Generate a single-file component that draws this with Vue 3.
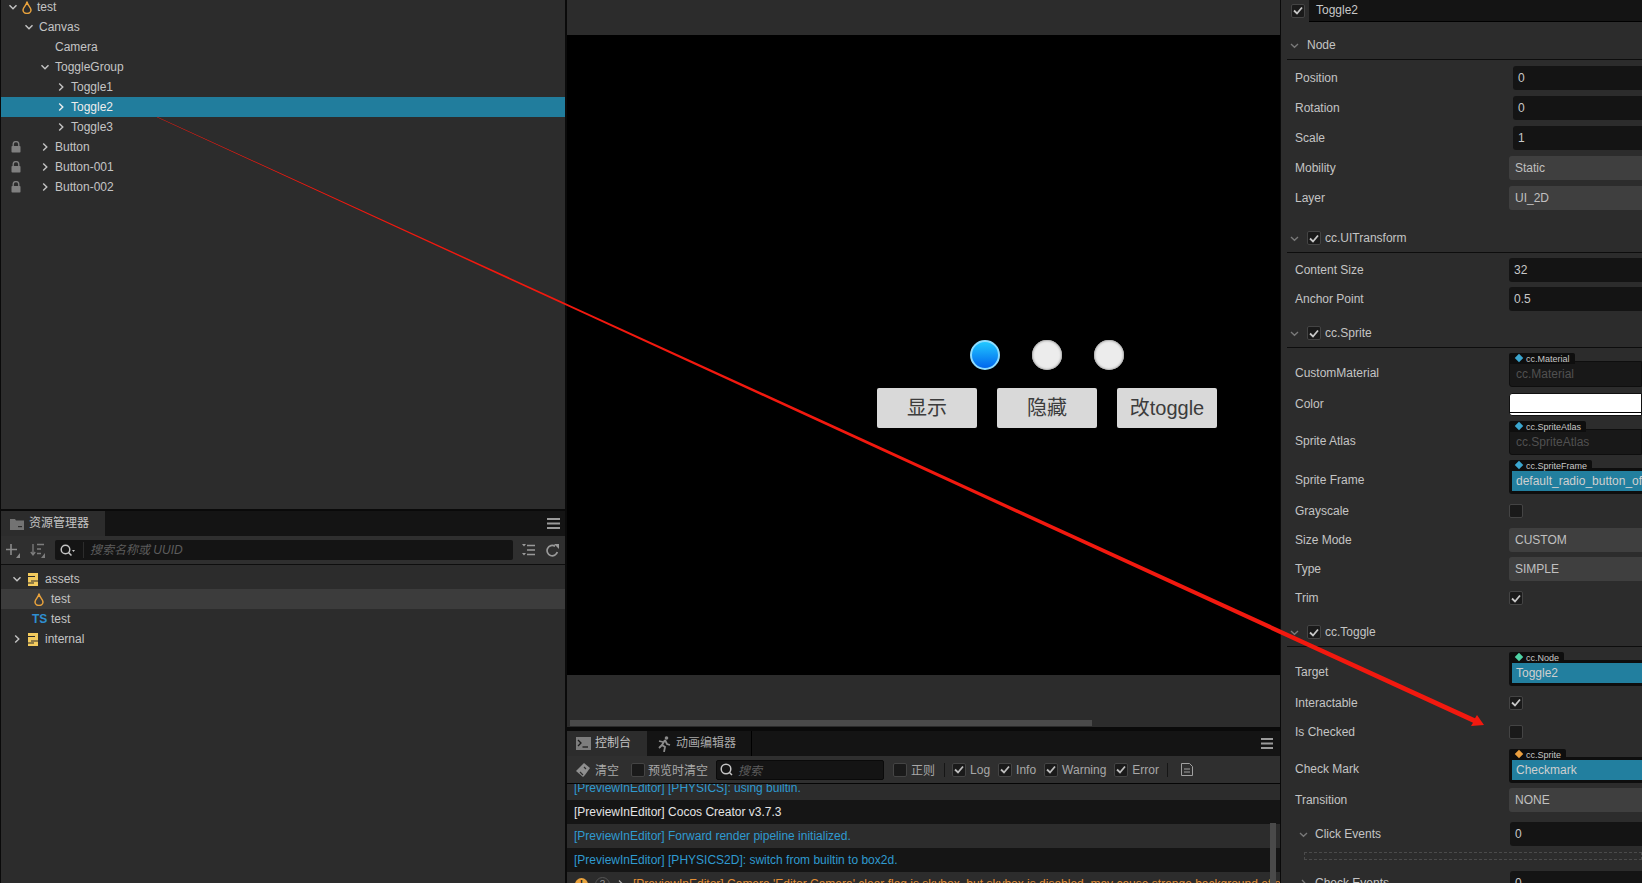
<script setup>
const sceneTree = [
  { name: 'test', depth: 0, arrow: 'down', flame: true },
  { name: 'Canvas', depth: 1, arrow: 'down' },
  { name: 'Camera', depth: 2 },
  { name: 'ToggleGroup', depth: 2, arrow: 'down' },
  { name: 'Toggle1', depth: 3, arrow: 'right' },
  { name: 'Toggle2', depth: 3, arrow: 'right', selected: true },
  { name: 'Toggle3', depth: 3, arrow: 'right' },
  { name: 'Button', depth: 2, arrow: 'right', locked: true },
  { name: 'Button-001', depth: 2, arrow: 'right', locked: true },
  { name: 'Button-002', depth: 2, arrow: 'right', locked: true }
]

const filters = ['Log', 'Info', 'Warning', 'Error']

const logs = [
  { text: '[PreviewInEditor] [PHYSICS]: using builtin.', cls: 'info alt' },
  { text: '[PreviewInEditor] Cocos Creator v3.7.3', cls: 'log' },
  { text: '[PreviewInEditor] Forward render pipeline initialized.', cls: 'info alt' },
  { text: '[PreviewInEditor] [PHYSICS2D]: switch from builtin to box2d.', cls: 'info' }
]

const sections = [
  {
    title: 'Node', check: false, cls: 'first',
    rows: [
      { label: 'Position', type: 'num', value: '0', h: 30 },
      { label: 'Rotation', type: 'num', value: '0', h: 30 },
      { label: 'Scale', type: 'num', value: '1', h: 30 },
      { label: 'Mobility', type: 'select', value: 'Static', h: 30 },
      { label: 'Layer', type: 'select', value: 'UI_2D', h: 30 }
    ]
  },
  {
    title: 'cc.UITransform', check: true, cls: 'm11',
    rows: [
      { label: 'Content Size', type: 'input', value: '32', h: 29 },
      { label: 'Anchor Point', type: 'input', value: '0.5', h: 29 }
    ]
  },
  {
    title: 'cc.Sprite', check: true, cls: 'm6',
    rows: [
      { label: 'CustomMaterial', type: 'object', tag: 'cc.Material', value: 'cc.Material', h: 40, empty: true, color: '#3ba6cf' },
      { label: 'Color', type: 'color', h: 28 },
      { label: 'Sprite Atlas', type: 'object', tag: 'cc.SpriteAtlas', value: 'cc.SpriteAtlas', h: 39, empty: true, color: '#3ba6cf' },
      { label: 'Sprite Frame', type: 'object', tag: 'cc.SpriteFrame', value: 'default_radio_button_off', h: 39, color: '#3ba6cf' },
      { label: 'Grayscale', type: 'check', on: false, h: 29 },
      { label: 'Size Mode', type: 'select', value: 'CUSTOM', h: 29 },
      { label: 'Type', type: 'select', value: 'SIMPLE', h: 29 },
      { label: 'Trim', type: 'check', on: true, h: 30 }
    ]
  },
  {
    title: 'cc.Toggle', check: true, cls: 'm5',
    rows: [
      { label: 'Target', type: 'object', tag: 'cc.Node', value: 'Toggle2', h: 39, color: '#4fd3a5' },
      { label: 'Interactable', type: 'check', on: true, h: 29 },
      { label: 'Is Checked', type: 'check', on: false, h: 29 },
      { label: 'Check Mark', type: 'object', tag: 'cc.Sprite', value: 'Checkmark', h: 39, color: '#eb9f3f' },
      { label: 'Transition', type: 'select', value: 'NONE', h: 30 }
    ]
  }
]
</script>

<template>
  <div class="editor">
    <!-- left column -->
    <div class="left">
      <div class="hierarchy">
        <div class="tree scene-tree">
          <div
            v-for="n in sceneTree"
            :key="n.name"
            class="tree-row"
            :class="{ selected: n.selected }"
            :style="{ paddingLeft: 7 + n.depth * 16 + 'px' }"
          >
            <svg v-if="n.locked" class="lock" width="10" height="12" viewBox="0 0 10 12">
              <path d="M2.2 5V3.4a2.8 2.8 0 0 1 5.6 0V5" fill="none" stroke="#808080" stroke-width="1.3" />
              <rect x="0.5" y="5" width="9" height="6.5" rx="0.8" fill="#808080" />
            </svg>
            <span class="slot">
              <svg v-if="n.arrow === 'down'" width="10" height="10" viewBox="0 0 10 10"><path d="M1.5 3.2 5 6.8l3.5-3.6" fill="none" stroke="currentColor" stroke-width="1.4" /></svg>
              <svg v-if="n.arrow === 'right'" width="10" height="10" viewBox="0 0 10 10"><path d="M3.2 1.5 6.8 5 3.2 8.5" fill="none" stroke="currentColor" stroke-width="1.4" /></svg>
            </span>
            <svg v-if="n.flame" class="flame" width="10" height="13" viewBox="0 0 10 13"><path d="M5 0.500C5 4 1 6 1 9a4 3.400 0 0 0 8 0C9 6 5 4 5 0.500Z" fill="none" stroke="#e8a23d" stroke-width="1.500" /></svg>
            <span>{{ n.name }}</span>
          </div>
        </div>
      </div>

      <div class="assets">
        <div class="tabbar">
          <div class="tab asset-tab">
            <svg width="14" height="12" viewBox="0 0 14 12"><path d="M0 1h5l1 1.500h8V12H0Z" fill="#737373" /><rect x="8" y="8" width="4" height="1.200" fill="#2c2c2c" /></svg>
            <span class="cjk raised">资源管理器</span>
          </div>
          <svg class="burger" width="13" height="11" viewBox="0 0 13 11"><path d="M0 1h13M0 5.500h13M0 10h13" stroke="#9a9a9a" stroke-width="2" /></svg>
        </div>
        <div class="asset-toolbar">
          <svg class="t-add" width="15" height="15" viewBox="0 0 15 15"><path d="M6 1v11M1 6.500h11" stroke="#8a8a8a" stroke-width="1.600" fill="none" /><path d="M15 10v5h-4Z" fill="#8a8a8a" /></svg>
          <svg class="t-sort" width="16" height="15" viewBox="0 0 16 15"><path d="M3 1v10M.8 9 3 12l2.200-3" stroke="#7d7d7d" stroke-width="1.300" fill="none" /><path d="M7 1.500h7M7 6h4M7 10.500h4" stroke="#7d7d7d" stroke-width="1.300" /><path d="M15 10v5h-4Z" fill="#7d7d7d" /></svg>
          <div class="asset-search">
            <svg class="s-icon" width="15" height="13" viewBox="0 0 15 13"><circle cx="5.500" cy="5.500" r="4.300" fill="none" stroke="#c4c4c4" stroke-width="1.500" /><path d="m8.500 8.500 3 3" stroke="#c4c4c4" stroke-width="1.500" /><path d="M12 6h3l-1.500 2Z" fill="#c4c4c4" /></svg>
            <span class="s-div"></span>
            <span class="placeholder cjk raised">搜索名称或 UUID</span>
          </div>
          <svg class="t-list" width="13" height="12" viewBox="0 0 13 12"><path d="M5 1.500h8M5 6h8M5 10.500h8" stroke="#9a9a9a" stroke-width="1.300" /><path d="M0 0h4L2 2.500ZM0 9h4l-2 2.500Z" fill="#9a9a9a" /></svg>
          <svg class="t-refresh" width="13" height="13" viewBox="0 0 13 13"><path d="M11.300 8A5.200 5.200 0 1 1 9 2.200" fill="none" stroke="#9a9a9a" stroke-width="1.700" /><path d="M8 0h5v5Z" fill="#9a9a9a" /></svg>
        </div>
        <div class="tree asset-tree">
          <div class="asset-row">
            <span class="a-arrow"><svg width="10" height="10" viewBox="0 0 10 10"><path d="M1.500 3.200 5 6.800l3.500-3.600" fill="none" stroke="currentColor" stroke-width="1.400" /></svg></span>
            <svg class="a-db" width="10" height="13" viewBox="0 0 10 13"><path d="M0 0h10v13H0Z" fill="#f3cb5e" /><path d="M0 3.500h7M3 8h7M0 10h6" stroke="#2c2c2c" stroke-width="1.100" /></svg>
            <span>assets</span>
          </div>
          <div class="asset-row hover child">
            <svg class="a-file" width="10" height="13" viewBox="0 0 10 13"><path d="M5 0.500C5 4 1 6 1 9a4 3.400 0 0 0 8 0C9 6 5 4 5 0.500Z" fill="none" stroke="#e8a23d" stroke-width="1.500" /></svg>
            <span>test</span>
          </div>
          <div class="asset-row child">
            <span class="ts">TS</span>
            <span>test</span>
          </div>
          <div class="asset-row">
            <span class="a-arrow"><svg width="10" height="10" viewBox="0 0 10 10"><path d="M3.200 1.500 6.800 5 3.200 8.500" fill="none" stroke="currentColor" stroke-width="1.400" /></svg></span>
            <svg class="a-db" width="10" height="13" viewBox="0 0 10 13"><path d="M0 0h10v13H0Z" fill="#f3cb5e" /><path d="M0 3.500h7M3 8h7M0 10h6" stroke="#2c2c2c" stroke-width="1.100" /></svg>
            <span>internal</span>
          </div>
        </div>
      </div>
    </div>

    <!-- center column -->
    <div class="center">
      <div class="scene">
        <div class="scene-top"></div>
        <div class="game">
          <div class="radios">
            <span class="radio on"></span>
            <span class="radio"></span>
            <span class="radio"></span>
          </div>
          <div class="game-buttons">
            <span class="game-btn">显示</span>
            <span class="game-btn">隐藏</span>
            <span class="game-btn">改toggle</span>
          </div>
        </div>
        <div class="scene-bottom"><div class="hscroll"></div></div>
      </div>

      <div class="console">
        <div class="tabbar console-tabs">
          <div class="tab con-tab">
            <svg width="15" height="13" viewBox="0 0 15 13"><rect width="15" height="13" fill="#7d7d7d" /><path d="m2 3 3 3-3 3" fill="none" stroke="#1c1c1c" stroke-width="1.300" /><path d="M6.500 10H12" stroke="#1c1c1c" stroke-width="1.300" /></svg>
            <span class="cjk raised">控制台</span>
          </div>
          <div class="tab2">
            <svg width="13" height="16" viewBox="0 0 13 16"><circle cx="8.500" cy="2" r="1.800" fill="#8c8c8c" /><path d="M7 4 4 9l3 2-1 5M7 4l2 4 3 1M5 6 1 5M4 9 1 12" fill="none" stroke="#8c8c8c" stroke-width="1.800" /></svg>
            <span class="cjk raised">动画编辑器</span>
          </div>
          <svg class="burger con-burger" width="12" height="11" viewBox="0 0 12 11"><path d="M0 1h12M0 5.500h12M0 10h12" stroke="#9a9a9a" stroke-width="2" /></svg>
        </div>

        <div class="console-toolbar">
          <svg class="broom" width="14" height="14" viewBox="0 0 14 14"><path d="M8 0 14 5 9 12 7 14 0 8 3 5Z" fill="#8f8f8f" /><path d="M4 9l3 3M8 4l2 2" stroke="#2e2e2e" stroke-width="1.200" /></svg>
          <span class="cjk dim clear">清空</span>
          <span class="cb c1"></span>
          <span class="cjk dim">预览时清空</span>
          <div class="con-search">
            <svg width="13" height="13" viewBox="0 0 13 13"><circle cx="6" cy="6" r="4.800" fill="none" stroke="#c4c4c4" stroke-width="1.500" /><path d="m9.500 9.500 2.500 2.500" stroke="#c4c4c4" stroke-width="1.500" /></svg>
            <span class="placeholder cjk">搜索</span>
          </div>
          <span class="cb c2"></span>
          <span class="cjk dim">正则</span>
          <span class="vline"></span>
          <template v-for="f in filters" :key="f">
            <span class="cb on-cb">
              <svg width="10" height="9" viewBox="0 0 10 9"><path d="m1 4.500 3 3 5-6" fill="none" stroke="#bdbdbd" stroke-width="1.800" /></svg>
            </span>
            <span class="dim filter">{{ f }}</span>
          </template>
          <span class="vline v2"></span>
          <svg class="doc" width="12" height="13" viewBox="0 0 12 13"><path d="M.5.500h8l3 3v9H.5Z" fill="none" stroke="#a0a0a0" /><path d="M3 6h6M3 9h6" stroke="#a0a0a0" /></svg>
        </div>

        <div class="logs">
          <div v-for="l in logs" :key="l.text" class="log-row" :class="l.cls">{{ l.text }}</div>
          <div class="log-row warn alt">
            <span class="warn-dot">!</span>
            <span class="count">3</span>
            <svg class="warn-arrow" width="6" height="9" viewBox="0 0 6 9"><path d="m1 .5 4 4-4 4" fill="none" stroke="#aaa" stroke-width="1.300" /></svg>
            <span>[PreviewInEditor] Camera 'Editor Camera' clear flag is skybox, but skybox is disabled, may cause strange background effect, please set a proper clear flag</span>
          </div>
          <div class="vscroll"></div>
        </div>
      </div>
    </div>

    <!-- inspector -->
    <div class="inspector">
      <div class="name-row">
        <span class="cb name-cb">
          <svg width="10" height="9" viewBox="0 0 10 9"><path d="m1 4.500 3 3 5-6" fill="none" stroke="#c8c8c8" stroke-width="1.800" /></svg>
        </span>
        <div class="name-input">Toggle2</div>
      </div>

      <div v-for="s in sections" :key="s.title" class="section" :class="s.cls">
        <div class="sec-head">
          <svg class="sec-chev" width="9" height="9" viewBox="0 0 9 9"><path d="M1 3 4.500 6.300 8 3" fill="none" stroke="#7a7a7a" stroke-width="1.300" /></svg>
          <span v-if="s.check" class="cb sec-cb">
            <svg width="10" height="9" viewBox="0 0 10 9"><path d="m1 4.500 3 3 5-6" fill="none" stroke="#c8c8c8" stroke-width="1.800" /></svg>
          </span>
          <span>{{ s.title }}</span>
        </div>
        <div class="rows">
          <div v-for="r in s.rows" :key="r.label" class="row" :class="'row-' + r.type" :style="{ height: r.h + 'px' }">
            <span class="label">{{ r.label }}</span>
            <div v-if="r.type === 'num'" class="field input num">{{ r.value }}</div>
            <div v-else-if="r.type === 'input'" class="field input">{{ r.value }}</div>
            <div v-else-if="r.type === 'select'" class="field select">{{ r.value }}</div>
            <div v-else-if="r.type === 'color'" class="field color"><span></span></div>
            <span v-else-if="r.type === 'check'" class="cb prop-cb">
              <svg v-if="r.on" width="10" height="9" viewBox="0 0 10 9"><path d="m1 4.500 3 3 5-6" fill="none" stroke="#c8c8c8" stroke-width="1.800" /></svg>
            </span>
            <div v-else-if="r.type === 'object'" class="object">
              <div class="obj-tag">
                <i :style="{ background: r.color }"></i>
                <span>{{ r.tag }}</span>
              </div>
              <div class="obj-box" :class="{ empty: r.empty }"><span>{{ r.value }}</span></div>
            </div>
          </div>
        </div>
      </div>

      <div class="events">
        <div class="event-row">
          <svg width="9" height="9" viewBox="0 0 9 9"><path d="M1 3 4.500 6.300 8 3" fill="none" stroke="#7a7a7a" stroke-width="1.300" /></svg>
          <span class="ev-label">Click Events</span>
          <div class="field input ev-input">0</div>
        </div>
        <div class="dashed"></div>
        <div class="event-row">
          <svg width="9" height="9" viewBox="0 0 9 9"><path d="M3 1 6.300 4.500 3 8" fill="none" stroke="#7a7a7a" stroke-width="1.300" /></svg>
          <span class="ev-label">Check Events</span>
          <div class="field input ev-input">0</div>
        </div>
      </div>
    </div>

    <!-- annotation arrow drawn over the screenshot -->
    <svg class="annot" width="1642" height="883" viewBox="0 0 1642 883">
      <polygon points="157,116.800 1475,718.200 1477,715 1484,725 1471,726 1473,722.800 157,117.200" fill="#f2190f" />
    </svg>
  </div>
</template>

<style>
html, body { margin: 0; background: #000; overflow: hidden; }
</style>

<style scoped>
.editor {
  position: relative;
  display: flex;
  width: 1642px;
  height: 883px;
  overflow: hidden;
  background: #0a0a0a;
  font-family: "Liberation Sans", Arial, sans-serif;
  font-size: 12px;
  color: #c4c4c4;
}
.cjk { font-family: "Liberation Sans", "Noto Sans CJK SC", sans-serif; }
.raised { margin-top: -4px; }

/* left */
.left {
  width: 564px;
  margin-left: 1px;
  margin-right: 2px;
  flex: none;
  display: flex;
  flex-direction: column;
}
.hierarchy {
  height: 509px;
  background: #2c2c2c;
  overflow: hidden;
  flex: none;
}
.scene-tree { margin-top: -3px; }
.tree-row {
  position: relative;
  display: flex;
  align-items: center;
  height: 20px;
}
.tree-row.selected { background: #217d9d; color: #eee; }
.slot {
  width: 10px;
  height: 10px;
  display: flex;
  margin-right: 5px;
  flex: none;
}
.lock { position: absolute; left: 10px; top: 4px; }
.flame { margin-left: -1px; margin-right: 5px; }

.assets {
  margin-top: 2px;
  flex: 1;
  background: #2c2c2c;
  display: flex;
  flex-direction: column;
}
.tabbar {
  height: 25px;
  background: #141414;
  display: flex;
  align-items: stretch;
  flex: none;
}
.tab {
  background: #2c2c2c;
  display: flex;
  align-items: center;
  color: #c4c4c4;
}
.asset-tab { width: 104px; padding-left: 9px; gap: 5px; box-sizing: border-box; }
.burger { margin-left: auto; margin-right: 5px; align-self: center; }
.con-burger { margin-right: 7px; }
.asset-toolbar {
  height: 28px;
  background: #2f2f2f;
  border-bottom: 1px solid #0e0e0e;
  display: flex;
  align-items: center;
  flex: none;
}
.t-add { margin-left: 4px; }
.t-sort { margin-left: 10px; }
.asset-search {
  margin-left: 9px;
  width: 458px;
  height: 20px;
  background: #141414;
  border-radius: 2px;
  display: flex;
  align-items: center;
  flex: none;
}
.s-icon { margin-left: 5px; }
.s-div { width: 1px; height: 16px; background: #2c2c2c; margin-left: 8px; margin-right: 6px; }
.placeholder { font-style: italic; color: #5c5c5c; }
.t-list { margin-left: 9px; }
.t-refresh { margin-left: 11px; }
.asset-tree { padding-top: 4px; }
.asset-row {
  height: 20px;
  display: flex;
  align-items: center;
  padding-left: 11px;
}
.asset-row.hover { background: #3c3c3c; }
.asset-row.child { padding-left: 33px; }
.a-arrow { width: 10px; height: 10px; display: flex; margin-right: 6px; }
.a-db { margin-right: 7px; }
.a-file { margin-right: 7px; }
.ts {
  font-weight: bold;
  font-size: 12px;
  color: #2f8fd0;
  width: 19px;
  margin-left: -2px;
  flex: none;
}

/* center */
.center {
  width: 713px;
  margin-right: 1px;
  flex: none;
  display: flex;
  flex-direction: column;
}
.scene { height: 727px; flex: none; display: flex; flex-direction: column; }
.scene-top { height: 35px; background: #2c2c2c; flex: none; }
.game {
  height: 640px;
  background: #000;
  flex: none;
  box-sizing: border-box;
  padding: 305px 0 0 310px;
}
.radios { display: flex; gap: 32px; margin-left: 93px; margin-bottom: 18px; }
.radio {
  width: 30px;
  height: 30px;
  border-radius: 50%;
  background: #ececec;
  box-shadow: inset 0 0 2px 1px #aaa;
  box-sizing: border-box;
}
.radio.on {
  background: linear-gradient(#22c8ff, #0066ee);
  border: 2px solid #8edcff;
  box-shadow: none;
}
.game-buttons { display: flex; gap: 20px; }
.game-btn {
  width: 100px;
  height: 40px;
  background: #d9d9d9;
  border-radius: 2px;
  color: #3c3c3c;
  font-family: "Liberation Sans", "Noto Sans CJK SC", sans-serif;
  font-size: 20px;
  display: flex;
  align-items: center;
  justify-content: center;
  padding-bottom: 3px;
  box-sizing: border-box;
}
.scene-bottom { flex: 1; background: #2c2c2c; position: relative; display: flex; align-items: flex-end; padding-bottom: 1px; }
.hscroll { width: 522px; height: 6px; background: #4a4a4a; margin-left: 3px; }

.console { margin-top: 4px; flex: 1; min-height: 0; display: flex; flex-direction: column; }
.console-tabs { flex: none; }
.con-tab { width: 80px; padding-left: 9px; gap: 4px; box-sizing: border-box; }
.tab2 {
  width: 105px;
  border-right: 1px solid #000;
  display: flex;
  align-items: center;
  gap: 5px;
  box-sizing: border-box;
  padding-left: 11px;
  color: #a8a8a8;
}
.console-toolbar {
  height: 28px;
  background: #2f2f2f;
  border-bottom: 1px solid #050505;
  box-sizing: border-box;
  display: flex;
  align-items: center;
  flex: none;
}
.broom { margin-left: 9px; margin-right: 5px; }
.dim { color: #a8a8a8; }
.clear { margin-right: 12px; }
.cb {
  width: 14px;
  height: 14px;
  box-sizing: border-box;
  background: #1a1a1a;
  border: 1px solid #444;
  border-radius: 2px;
  display: inline-flex;
  align-items: center;
  justify-content: center;
  flex: none;
}
.c1 { margin-right: 3px; }
.con-search {
  width: 168px;
  height: 20px;
  margin-left: 8px;
  background: #141414;
  border: 1px solid #0a0a0a;
  border-radius: 2px;
  box-sizing: border-box;
  display: flex;
  align-items: center;
  gap: 5px;
  padding-left: 3px;
}
.c2 { margin-left: 9px; margin-right: 4px; }
.vline { width: 1px; height: 14px; background: #161616; margin-left: 9px; margin-right: 7px; }
.on-cb { margin-right: 4px; }
.filter { margin-right: 8px; }
.v2 { margin-left: 0; margin-right: 13px; }
.logs { position: relative; flex: 1; min-height: 0; overflow: hidden; background: #2c2c2c; }
.log-row {
  height: 24px;
  display: flex;
  align-items: center;
  padding-left: 7px;
  white-space: nowrap;
  background: #151515;
  color: #e4e4e4;
}
.log-row:first-child { margin-top: -8px; }
.log-row.alt { background: #2c2c2c; }
.log-row.info { color: #2f9ad0; }
.log-row.warn { color: #e28f35; padding-left: 8px; }
.warn-dot {
  width: 13px;
  height: 13px;
  border-radius: 50%;
  background: #e9a23d;
  color: #222;
  font-size: 10px;
  font-weight: bold;
  display: flex;
  align-items: center;
  justify-content: center;
  margin-right: 7px;
  flex: none;
}
.count {
  width: 13px;
  height: 13px;
  border: 1px solid #555;
  border-radius: 50%;
  color: #999;
  font-size: 10px;
  display: flex;
  align-items: center;
  justify-content: center;
  margin-right: 8px;
  flex: none;
}
.warn-arrow { margin-right: 9px; flex: none; }
.vscroll {
  position: absolute;
  left: 703px;
  top: 39px;
  width: 6px;
  height: 70px;
  background: #4a4a4a;
}

/* inspector */
.inspector {
  flex: 1;
  min-width: 0;
  background: #2c2c2c;
  overflow: hidden;
}
.name-row { height: 22px; display: flex; align-items: center; box-sizing: border-box; }
.name-cb { margin-left: 10px; margin-top: -1px; }
.name-input {
  margin-left: 4px;
  flex: 1;
  height: 22px;
  background: #141414;
  border-bottom: 1px solid #000;
  box-sizing: border-box;
  padding-left: 7px;
  line-height: 21px;
  color: #c8c8c8;
}
.section.first { margin-top: 9px; }
.section.m11 { margin-top: 11px; }
.section.m6 { margin-top: 6px; }
.section.m5 { margin-top: 5px; }
.sec-head {
  height: 29px;
  margin-left: 6px;
  border-bottom: 1px solid #0d0d0d;
  box-sizing: border-box;
  display: flex;
  align-items: center;
  padding-left: 3px;
  color: #c4c4c4;
}
.sec-chev { margin-right: 8px; flex: none; }
.sec-cb { margin-right: 4px; }
.rows { padding-top: 2px; }
.section.first .rows { padding-top: 3px; }
.row {
  display: flex;
  align-items: center;
  padding-left: 14px;
  box-sizing: border-box;
}
.label { width: 214px; flex: none; color: #c4c4c4; }
.row-object .label { padding-top: 6px; }
.field {
  flex: 1;
  height: 24px;
  border-radius: 3px 0 0 3px;
  box-sizing: border-box;
  display: flex;
  align-items: center;
}
.input { background: #141414; padding-left: 5px; color: #c8c8c8; }
.num { margin-left: 4px; }
.select { background: #3f3f3f; padding-left: 6px; color: #c0c0c0; }
.color {
  height: 23px;
  background: #ffffff;
  border: 1px solid #111;
  align-items: flex-end;
  padding-bottom: 2px;
}
.color span { display: block; width: 100%; height: 1px; background: #000; }
.object {
  flex: 1;
  display: flex;
  flex-direction: column;
  min-width: 0;
  height: 34px;
  align-self: flex-start;
  margin-top: 3px;
}
.obj-tag {
  position: relative;
  z-index: 1;
  align-self: flex-start;
  height: 11px;
  margin-bottom: -3px;
  background: #0e0e0e;
  border-radius: 2px 2px 0 0;
  padding: 0 5px 0 7px;
  box-sizing: border-box;
  display: flex;
  align-items: center;
  gap: 4px;
  font-size: 9px;
  color: #c8c8c8;
  flex: none;
}
.obj-tag i { display: block; width: 6px; height: 6px; transform: rotate(45deg); margin-top: -1px; flex: none; }
.obj-box {
  flex: 1;
  background: #0e0e0e;
  padding: 3px 0 3px 3px;
  border-radius: 0 0 0 3px;
  display: flex;
  min-height: 0;
}
.obj-box span {
  flex: 1;
  background: #227f9f;
  color: #cfcfcf;
  padding-left: 4px;
  display: flex;
  align-items: center;
  white-space: nowrap;
}
.obj-box.empty { background: #181818; border: 1px solid #0e0e0e; padding: 2px; }
.obj-box.empty span { background: transparent; color: #505050; }
.events { margin-top: 5px; }
.event-row {
  display: flex;
  align-items: center;
  height: 28px;
  padding-left: 18px;
}
.ev-label { width: 195px; margin-left: 7px; flex: none; color: #c4c4c4; }
.ev-input { flex: 1; }
.dashed {
  margin: 4px 0 9px 23px;
  height: 8px;
  border: 1px dashed #4a4a4a;
  box-sizing: border-box;
}
.annot { position: absolute; left: 0; top: 0; pointer-events: none; }
</style>
